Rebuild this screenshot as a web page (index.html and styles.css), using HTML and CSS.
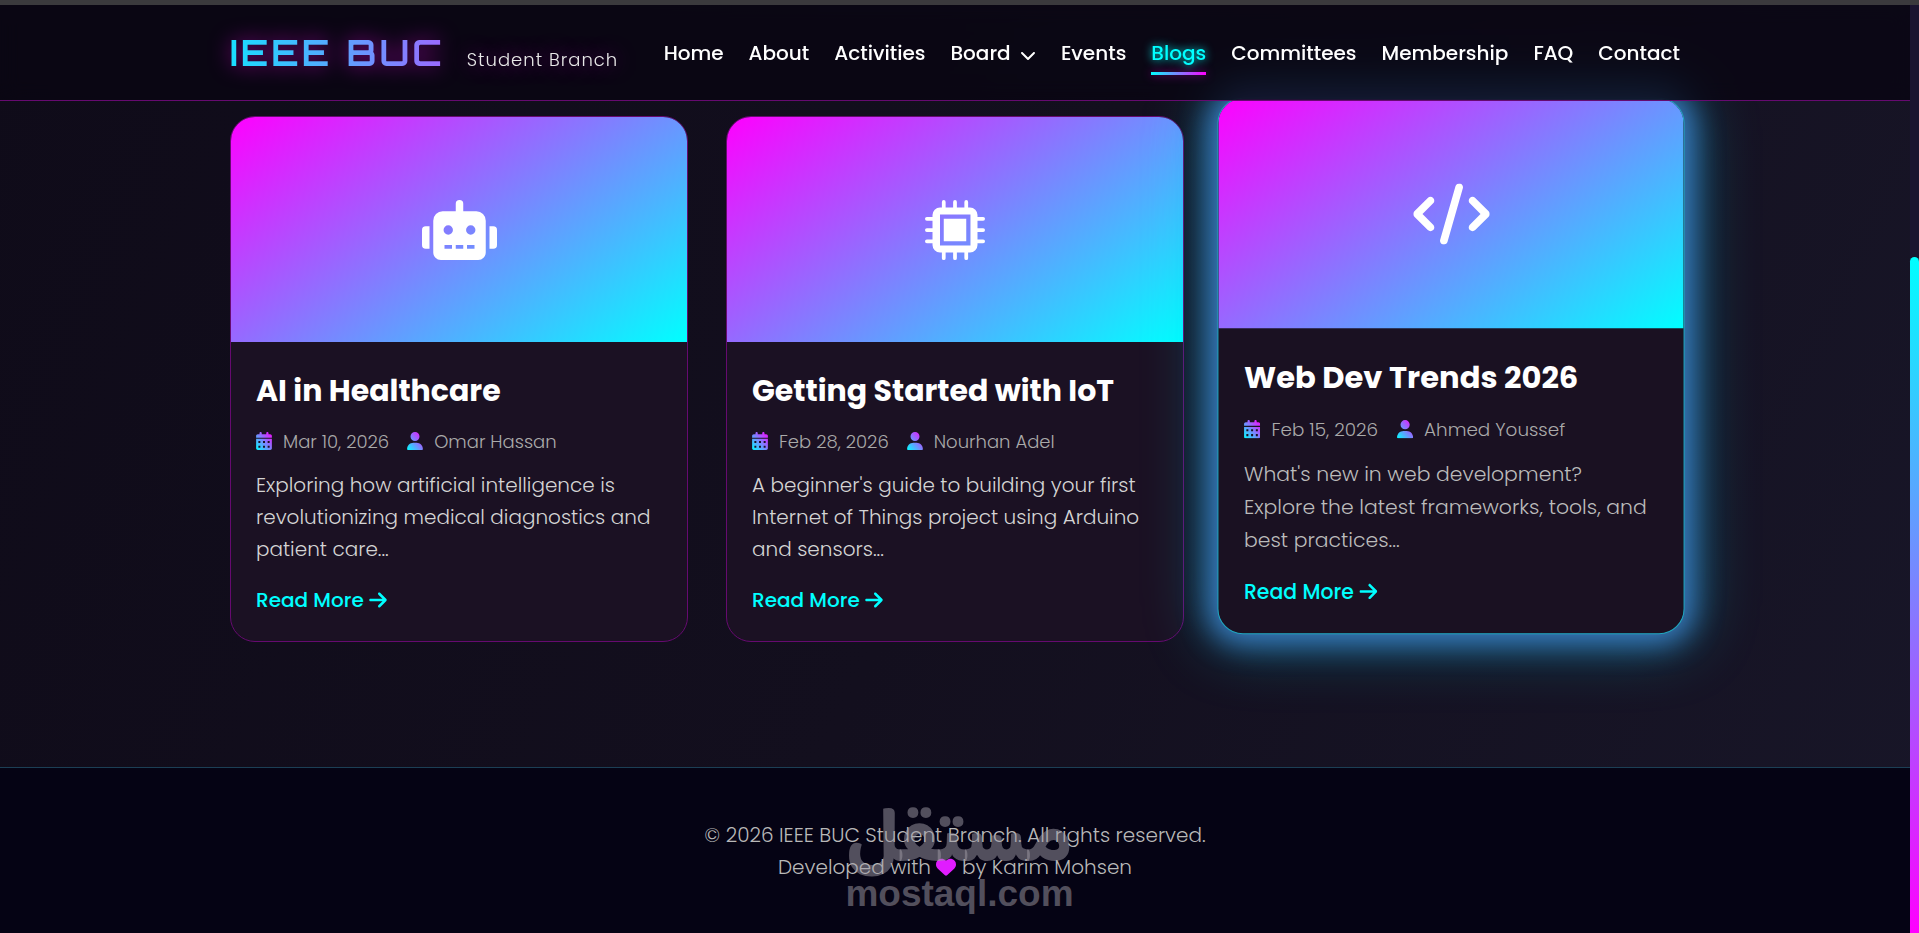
FILE: index.html
```html
<!DOCTYPE html>
<html lang="en">
<head>
    <meta charset="UTF-8">
    <meta name="viewport" content="width=device-width, initial-scale=1.0">
    <title>Blogs - IEEE BUC Student Branch</title>
    <link rel="stylesheet" href="styles.css">
</head>
<body>
    <!-- Shared icons -->
    <svg class="sprite" aria-hidden="true">
        <defs>
            <linearGradient id="neon" x1="0" y1="1" x2="1" y2="0">
                <stop offset="0" stop-color="#00ffff"/>
                <stop offset="1" stop-color="#ff00ff"/>
            </linearGradient>
        </defs>
        <symbol id="calendar" viewBox="0 0 448 512">
            <path fill-rule="evenodd" d="M128 0c17.700 0 32 14.300 32 32V64H288V32c0-17.700 14.300-32 32-32s32 14.300 32 32V64h48c26.500 0 48 21.500 48 48v48H0V112C0 85.500 21.500 64 48 64H96V32c0-17.700 14.300-32 32-32zM0 192H448V464c0 26.500-21.500 48-48 48H48c-26.500 0-48-21.500-48-48V192zM64 256v56h56v-56zM196 256v56h56v-56zM328 256v56h56v-56zM64 392v56h56v-56zM196 392v56h56v-56zM328 392v56h56v-56z"/>
        </symbol>
        <symbol id="user" viewBox="0 0 448 512">
            <path d="M224 256A128 128 0 1 0 224 0a128 128 0 1 0 0 256zm-45.700 48C79.800 304 0 383.800 0 482.300C0 498.700 13.300 512 29.700 512H418.300c16.400 0 29.700-13.300 29.700-29.700C448 383.800 368.200 304 269.700 304H178.300z"/>
        </symbol>
        <symbol id="arrow" viewBox="0 0 448 512">
            <path d="M438.600 278.600c12.500-12.500 12.500-32.800 0-45.300l-160-160c-12.500-12.500-32.800-12.500-45.300 0s-12.500 32.800 0 45.300L338.800 224 32 224c-17.700 0-32 14.300-32 32s14.300 32 32 32l306.700 0L233.400 393.400c-12.500 12.500-12.500 32.800 0 45.300s32.800 12.500 45.300 0l160-160z"/>
        </symbol>
    </svg>

    <div class="window-edge"></div>
    <div class="viewport">
        <div class="page">
            <header class="navbar">
                <div class="container nav-inner">
                    <a href="#" class="logo">
                        <span class="logo-name">IEEE BUC</span>
                        <span class="logo-sub">Student Branch</span>
                    </a>
                    <nav class="nav-links">
                        <a href="#">Home</a>
                        <a href="#">About</a>
                        <a href="#">Activities</a>
                        <a href="#">Board
                            <svg class="chevron" viewBox="0 0 512 512" aria-hidden="true"><path d="M233.400 406.600c12.500 12.500 32.800 12.500 45.300 0l192-192c12.500-12.500 12.500-32.800 0-45.300s-32.800-12.500-45.300 0L256 338.700 86.600 169.400c-12.500-12.500-32.800-12.500-45.300 0s-12.500 32.800 0 45.300l192 192z"/></svg>
                        </a>
                        <a href="#">Events</a>
                        <a href="#" class="active">Blogs</a>
                        <a href="#">Committees</a>
                        <a href="#">Membership</a>
                        <a href="#">FAQ</a>
                        <a href="#">Contact</a>
                    </nav>
                </div>
            </header>

            <main class="container blog-grid">
                <article class="card">
                    <div class="card-image">
                        <svg class="card-icon" viewBox="0 0 640 512" aria-hidden="true"><path d="M32 224H64V416H32A32 32 0 0 1 0 384V256A32 32 0 0 1 32 224Zm512-48V448a64 64 0 0 1-64 64H160a64 64 0 0 1-64-64V176a80 80 0 0 1 80-80H288V32a32 32 0 0 1 64 0V96H464A80 80 0 0 1 544 176ZM264 256a40 40 0 1 0-40 40A40 40 0 0 0 264 256Zm-8 128H192v32h64Zm96 0H288v32h64ZM456 256a40 40 0 1 0-40 40A40 40 0 0 0 456 256Zm-8 128H384v32h64ZM640 256V384a32 32 0 0 1-32 32H576V224h32A32 32 0 0 1 640 256Z"/></svg>
                    </div>
                    <div class="card-body">
                        <h3>AI in Healthcare</h3>
                        <div class="meta">
                            <span><svg class="meta-icon" aria-hidden="true"><use href="#calendar"/></svg>Mar 10, 2026</span>
                            <span><svg class="meta-icon" aria-hidden="true"><use href="#user"/></svg>Omar Hassan</span>
                        </div>
                        <p>Exploring how artificial intelligence is revolutionizing medical diagnostics and patient care...</p>
                        <a href="#" class="read-more">Read More <svg class="arrow" aria-hidden="true"><use href="#arrow"/></svg></a>
                    </div>
                </article>

                <article class="card">
                    <div class="card-image">
                        <svg class="card-icon" viewBox="0 0 512 512" aria-hidden="true">
                            <path fill-rule="evenodd" d="M128 64H384a64 64 0 0 1 64 64V384a64 64 0 0 1-64 64H128a64 64 0 0 1-64-64V128a64 64 0 0 1 64-64ZM128 124V388H388V124ZM160 160H352V352H160Z"/>
                            <path d="M144 72V16a16 16 0 0 1 32 0V72ZM240 72V16a16 16 0 0 1 32 0V72ZM336 72V16a16 16 0 0 1 32 0V72ZM144 440V496a16 16 0 0 0 32 0V440ZM240 440V496a16 16 0 0 0 32 0V440ZM336 440V496a16 16 0 0 0 32 0V440ZM72 144H16a16 16 0 0 0 0 32H72ZM72 240H16a16 16 0 0 0 0 32H72ZM72 336H16a16 16 0 0 0 0 32H72ZM440 144H496a16 16 0 0 1 0 32H440ZM440 240H496a16 16 0 0 1 0 32H440ZM440 336H496a16 16 0 0 1 0 32H440Z"/>
                        </svg>
                    </div>
                    <div class="card-body">
                        <h3>Getting Started with IoT</h3>
                        <div class="meta">
                            <span><svg class="meta-icon" aria-hidden="true"><use href="#calendar"/></svg>Feb 28, 2026</span>
                            <span><svg class="meta-icon" aria-hidden="true"><use href="#user"/></svg>Nourhan Adel</span>
                        </div>
                        <p>A beginner's guide to building your first Internet of Things project using Arduino and sensors...</p>
                        <a href="#" class="read-more">Read More <svg class="arrow" aria-hidden="true"><use href="#arrow"/></svg></a>
                    </div>
                </article>

                <article class="card raised">
                    <div class="card-image">
                        <svg class="card-icon" viewBox="0 0 640 512" aria-hidden="true"><path d="M392.800 1.200c-17-4.900-34.700 5-39.600 22l-128 448c-4.900 17 5 34.700 22 39.600s34.700-5 39.600-22l128-448c4.900-17-5-34.700-22-39.600zm80.600 120.100c-12.500 12.500-12.500 32.800 0 45.300L562.700 256l-89.400 89.400c-12.500 12.500-12.500 32.800 0 45.300s32.800 12.500 45.300 0l112-112c12.500-12.500 12.500-32.800 0-45.300l-112-112c-12.500-12.500-32.800-12.500-45.300 0zm-306.700 0c-12.500-12.500-32.800-12.500-45.300 0l-112 112c-12.500 12.500-12.500 32.800 0 45.300l112 112c12.500 12.500 32.800 12.500 45.300 0s12.500-32.800 0-45.300L77.300 256l89.400-89.400c12.500-12.500 12.500-32.800 0-45.300z"/></svg>
                    </div>
                    <div class="card-body">
                        <h3>Web Dev Trends 2026</h3>
                        <div class="meta">
                            <span><svg class="meta-icon" aria-hidden="true"><use href="#calendar"/></svg>Feb 15, 2026</span>
                            <span><svg class="meta-icon" aria-hidden="true"><use href="#user"/></svg>Ahmed Youssef</span>
                        </div>
                        <p>What's new in web development? Explore the latest frameworks, tools, and best practices...</p>
                        <a href="#" class="read-more">Read More <svg class="arrow" aria-hidden="true"><use href="#arrow"/></svg></a>
                    </div>
                </article>
            </main>

            <footer class="footer">
                <p>&copy; 2026 IEEE BUC Student Branch. All rights reserved.</p>
                <p>Developed with <svg class="heart" viewBox="0 0 512 512" role="img" aria-label="love"><path d="M47.600 300.400L228.300 469.100c7.500 7 17.400 10.900 27.700 10.900s20.200-3.900 27.700-10.900L464.400 300.400c30.400-28.300 47.600-68 47.600-109.500v-5.800c0-69.900-50.500-129.500-119.400-141C347 36.500 300.600 51.400 268 84L256 96 244 84c-32.600-32.600-79-47.500-124.600-39.900C50.500 55.600 0 115.200 0 185.100v5.800c0 41.500 17.200 81.200 47.600 109.500z"/></svg> by Karim Mohsen</p>
                <div class="watermark">
                    <span class="watermark-ar" lang="ar">مستقل</span>
                    <span class="watermark-en">mostaql.com</span>
                </div>
            </footer>
        </div>
        <div class="scroll-track"><div class="scroll-thumb"></div></div>
    </div>
</body>
</html>
```
FILE: styles.css
```css
* {
    margin: 0;
    padding: 0;
    box-sizing: border-box;
}
body {
    display: flex;
    flex-direction: column;
    min-height: 100vh;
    font-family: Poppins, Inter, sans-serif;
    font-size: 20px;
    line-height: 32px;
    color: #fff;
    background: linear-gradient(115deg, #0f0b19, #130f1e 50%, #181628);
}
a {
    color: inherit;
    text-decoration: none;
}
svg {
    fill: currentColor;
}
.sprite {
    position: absolute;
    width: 0;
    height: 0;
}
.window-edge {
    height: 5px;
    background: #3b3a3d;
}
.viewport {
    flex: 1;
    display: flex;
}
.page {
    flex: 1;
    display: flex;
    flex-direction: column;
    overflow: hidden;
}
.container {
    width: 100%;
    max-width: 1450px;
    margin: 0 auto;
}

/* Navbar */
.navbar {
    position: relative;
    z-index: 10;
    background: rgba(9, 5, 18, 0.8);
    border-bottom: 1px solid #660a70;
    backdrop-filter: blur(10px);
}
.nav-inner {
    display: flex;
    align-items: center;
    justify-content: space-between;
    height: 95px;
}
.logo {
    display: flex;
    align-items: baseline;
    gap: 22px;
    padding-top: 8px;
}
.logo-name {
    font-family: Orbitron, "DejaVu Sans", sans-serif;
    font-size: 36px;
    font-weight: 700;
    letter-spacing: 3px;
    color: transparent;
    background: linear-gradient(90deg, #18e0ff, #9c68ff);
    -webkit-background-clip: text;
    background-clip: text;
    filter: drop-shadow(0 0 10px rgba(255, 0, 255, 0.5));
}
.logo-sub {
    font-size: 18px;
    font-weight: 300;
    letter-spacing: 1px;
    color: #e8e8e8;
    text-shadow: 0 0 20px rgba(255, 0, 255, 0.5);
}
.nav-links {
    display: flex;
    gap: 25px;
    font-weight: 500;
}
.nav-links a {
    position: relative;
}
.chevron {
    width: 16px;
    height: 16px;
    margin-left: 4px;
    vertical-align: -3px;
}
.nav-links .active {
    color: #00ffff;
    text-shadow: 0 0 10px #00ffff;
}
.active::after {
    content: "";
    position: absolute;
    left: 0;
    right: 0;
    bottom: -6px;
    height: 3px;
    background: linear-gradient(90deg, #00ffff, #ff00ff);
    box-shadow: 0 0 10px rgba(255, 0, 255, 0.5);
}

/* Blog cards */
.blog-grid {
    display: grid;
    grid-template-columns: repeat(3, 1fr);
    gap: 38px;
    padding: 15px 0 125px;
}
.card {
    overflow: hidden;
    background: #1b1123;
    border: 1px solid #660a70;
    border-radius: 25px;
}
.card.raised {
    background: #1a1122;
    border-color: #20a8c0;
    box-shadow: 0 0 28px 8px #3c7cc4, 0 0 60px 10px rgba(0, 200, 220, 0.4);
    transform: translateY(-13px) scale(1.02);
}
.card-image {
    display: flex;
    align-items: center;
    justify-content: center;
    height: 225px;
    background: linear-gradient(145deg, #ff00ff, #00ffff);
}
.card-icon {
    height: 60px;
}
.card-body {
    padding: 25px;
}
.card h3 {
    margin-bottom: 11px;
    font-size: 30px;
    line-height: 48px;
}
.meta {
    display: flex;
    gap: 18px;
    margin-bottom: 11px;
    font-size: 18px;
    font-weight: 300;
    color: #aaa;
}
.meta-icon {
    width: 16px;
    height: 18px;
    margin-right: 11px;
    vertical-align: -2px;
    fill: url(#neon);
}
.card p {
    margin-bottom: 19px;
    font-weight: 300;
    color: #d4d4d4;
}
.card.raised p {
    color: #bbb;
}
.read-more {
    font-weight: 500;
    color: #00ffff;
}
.arrow {
    width: 18px;
    height: 20px;
    vertical-align: -3px;
}

/* Footer */
.footer {
    position: relative;
    flex: 1;
    padding: 51px 0 40px;
    text-align: center;
    font-weight: 300;
    color: #b8b8b8;
    background: #050314;
    border-top: 1px solid #1c3f55;
}
.heart {
    width: 20px;
    height: 20px;
    vertical-align: -3px;
    fill: #e01cff;
}
.watermark {
    position: absolute;
    top: 38px;
    left: 9px;
    right: 0;
    display: flex;
    flex-direction: column;
    align-items: center;
    font-weight: 700;
    color: rgba(160, 155, 165, 0.5);
}
.watermark-ar {
    font-family: "Baloo Bhaijaan 2", Cairo, Tajawal, "DejaVu Sans", sans-serif;
    font-size: 78px;
    line-height: 76px;
}
.watermark-en {
    font-family: "Liberation Sans", Arial, sans-serif;
    font-size: 37px;
    line-height: 24px;
}

/* Scrollbar */
.scroll-track {
    width: 9px;
    padding-top: 252px;
    display: flex;
    background: #1b1430;
}
.scroll-thumb {
    flex: 1;
    border-radius: 5px 5px 0 0;
    background: linear-gradient(#00ffff, #ff00ff);
}
```
